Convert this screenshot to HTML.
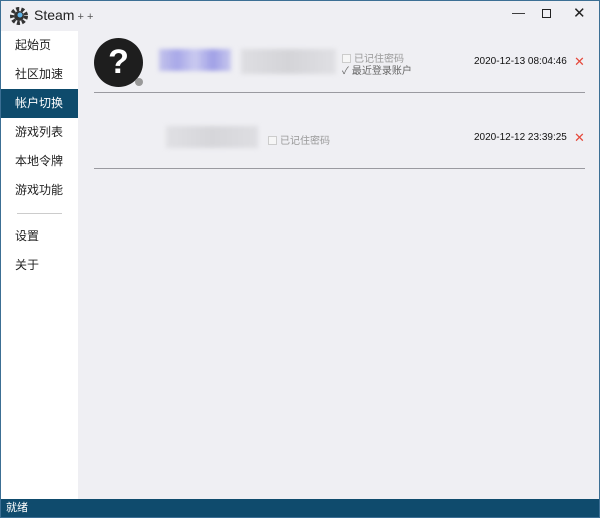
<!DOCTYPE html>
<html><head><meta charset="utf-8"><style>
*{margin:0;padding:0;box-sizing:border-box}
body{width:600px;height:518px;overflow:hidden;background:#efeff3;font-family:"Liberation Sans","Noto Sans CJK SC",sans-serif;position:relative;border:1px solid #3c6f94}
.title{position:absolute;left:0;top:0;width:598px;height:30px;background:#efeff3}
.side{position:absolute;left:0;top:30px;width:77px;height:469px;background:#fff}
.side div{height:29px;line-height:29px;padding-left:14px;font-size:12px;color:#222}
.side .sel{background:#0e4b6c;color:#fff}
.status{position:absolute;left:0;bottom:0;width:598px;height:18px;background:#0f4b6d;color:#fff;font-size:11px;line-height:18px;padding-left:5px}
.blur{position:absolute;filter:blur(2px)}
.t{position:absolute;font-size:10px;color:#999}
.d{position:absolute;font-size:10px;color:#111}
.x{position:absolute;color:#e5483a;font-size:13px}
.hr{position:absolute;left:93px;width:491px;height:1px;background:#9a9aa0}
.cb{display:inline-block;width:9px;height:9px;border:1px solid #ccc;vertical-align:-1px;margin-right:3px;background:#f6f6f6}
</style></head><body>
<div class="title">
<svg style="position:absolute;left:8px;top:5px" width="20" height="20" viewBox="0 0 20 20"><circle cx="10" cy="10" r="7" fill="none" stroke="#333" stroke-width="4" stroke-dasharray="3 2"/><circle cx="10" cy="10" r="5" fill="#333"/><circle cx="11" cy="9" r="2.5" fill="#5fb3e8"/></svg>
<div style="position:absolute;left:33px;top:6px;font-size:14px;color:#222">Steam<span style="font-size:11px;color:#555"> + +</span></div>
<div style="position:absolute;left:511px;top:4px;font-size:13px;color:#222">—</div>
<div style="position:absolute;left:541px;top:8px;width:9px;height:9px;border:1px solid #222"></div>
<div style="position:absolute;left:572px;top:3px;font-size:15px;color:#222">✕</div>
</div>
<div class="side">
<div>起始页</div><div>社区加速</div><div class="sel">帐户切换</div><div>游戏列表</div><div>本地令牌</div><div>游戏功能</div>
<div style="height:1px;margin:8px 16px 8px 16px;padding:0;background:#ccc"></div>
<div>设置</div><div>关于</div>
</div>
<div style="position:absolute;left:93px;top:37px;width:49px;height:49px;border-radius:50%;background:#1e1e1e;color:#fff;font-size:34px;font-weight:bold;text-align:center;line-height:49px">?</div>
<div style="position:absolute;left:134px;top:77px;width:8px;height:8px;border-radius:50%;background:#999"></div>
<div class="blur" style="left:158px;top:48px;width:72px;height:22px;background:linear-gradient(90deg,#c4c4ec,#a8a8e8,#cacaf0,#a0a0e6,#c8c8ee)"></div>
<div class="blur" style="left:240px;top:48px;width:95px;height:25px;background:linear-gradient(90deg,#dedee2,#d4d4d8,#e0e0e4)"></div>
<div class="t" style="left:341px;top:49px"><span class="cb"></span>已记住密码</div>
<div class="t" style="left:341px;top:61px;color:#666"><span style="margin-right:3px">✓</span>最近登录账户</div>
<div class="d" style="left:473px;top:55px">2020-12-13 08:04:46</div>
<div class="x" style="left:573px;top:53px">✕</div>
<div class="hr" style="top:91px"></div>
<div class="blur" style="left:165px;top:125px;width:92px;height:22px;background:linear-gradient(90deg,#e0e0e4,#d6d6da,#dedee2)"></div>
<div class="t" style="left:267px;top:131px"><span class="cb"></span>已记住密码</div>
<div class="d" style="left:473px;top:131px">2020-12-12 23:39:25</div>
<div class="x" style="left:573px;top:129px">✕</div>
<div class="hr" style="top:167px"></div>
<div class="status">就绪</div>
</body></html>
